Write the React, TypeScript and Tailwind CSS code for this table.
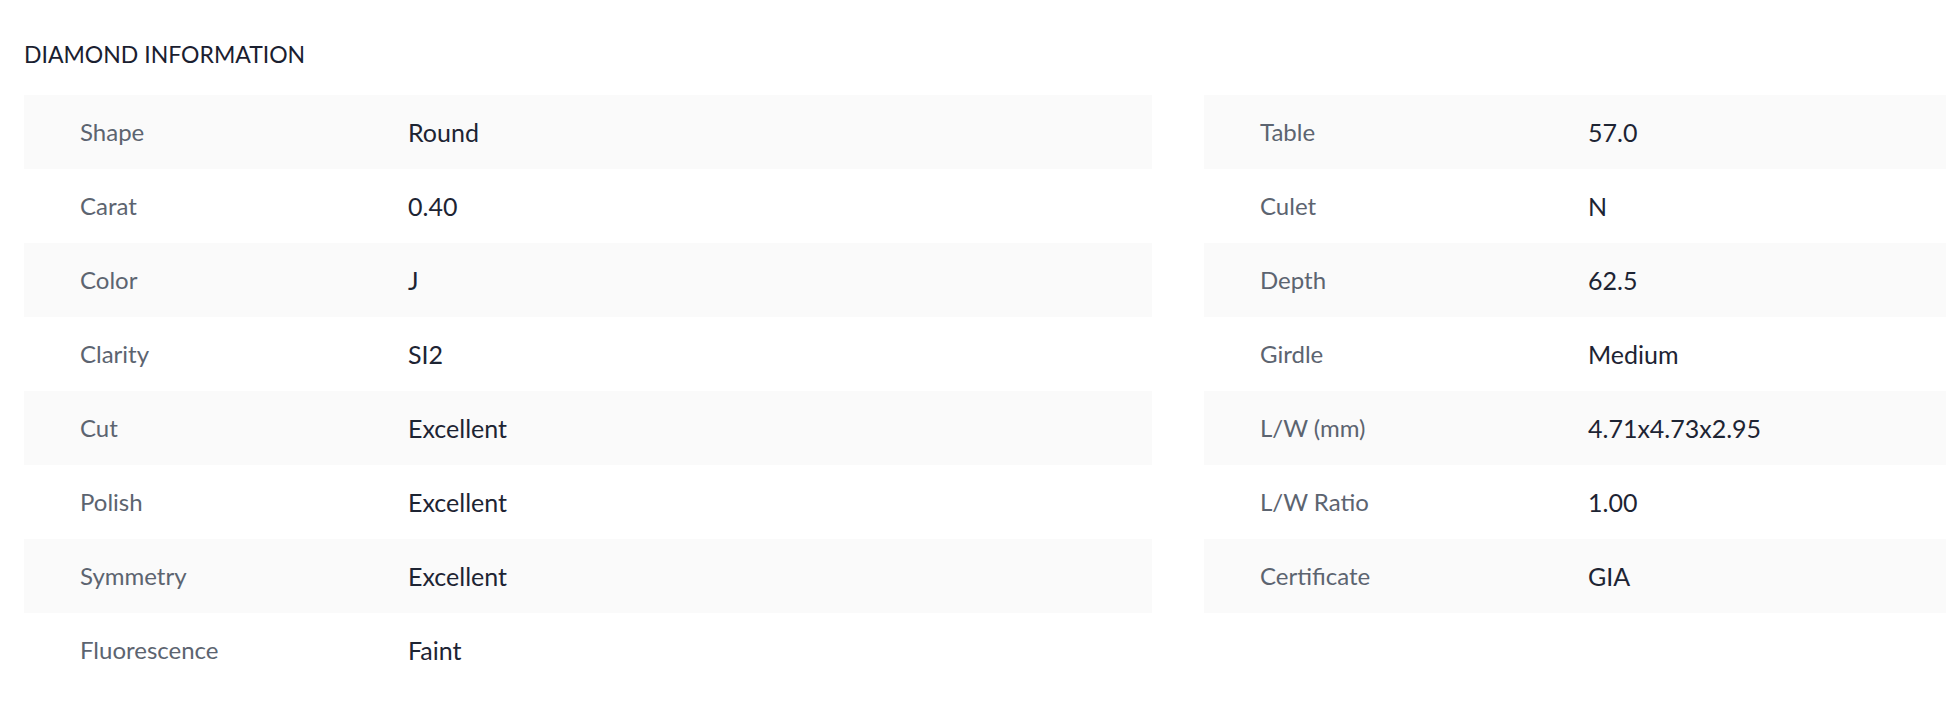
import React from 'react';

type Spec = { label: string; value: string };

const left: Spec[] = [
  { label: 'Shape', value: 'Round' },
  { label: 'Carat', value: '0.40' },
  { label: 'Color', value: 'J' },
  { label: 'Clarity', value: 'SI2' },
  { label: 'Cut', value: 'Excellent' },
  { label: 'Polish', value: 'Excellent' },
  { label: 'Symmetry', value: 'Excellent' },
  { label: 'Fluorescence', value: 'Faint' },
];

const right: Spec[] = [
  { label: 'Table', value: '57.0' },
  { label: 'Culet', value: 'N' },
  { label: 'Depth', value: '62.5' },
  { label: 'Girdle', value: 'Medium' },
  { label: 'L/W (mm)', value: '4.71x4.73x2.95' },
  { label: 'L/W Ratio', value: '1.00' },
  { label: 'Certificate', value: 'GIA' },
];

const SpecTable: React.FC<{ rows: Spec[] }> = ({ rows }) => (
  <div className="flex flex-col">
    {rows.map((row, i) => (
      <div
        key={row.label}
        className={`flex h-[74px] items-center pl-[56px] ${i % 2 === 0 ? 'bg-[#fafafa]' : 'bg-white'}`}
      >
        <span className="w-[328px] shrink-0 text-[24px] text-[#5c6470]">{row.label}</span>
        <span className="text-[25px] text-[#1d2433]">{row.value}</span>
      </div>
    ))}
  </div>
);

export default function App() {
  return (
    <div
      className="h-[713px] w-[1946px] overflow-hidden bg-white leading-8"
      style={{ fontFamily: 'Lato, "Noto Sans", sans-serif' }}
    >
      <div className="w-[2360px] px-[24px] pt-[38px]">
        <h2 className="mb-[25px] text-[23px] leading-8 text-[#1a2030]">DIAMOND INFORMATION</h2>
        <div className="grid grid-cols-[1128px_1128px] gap-x-[52px]">
          <SpecTable rows={left} />
          <SpecTable rows={right} />
        </div>
      </div>
    </div>
  );
}
